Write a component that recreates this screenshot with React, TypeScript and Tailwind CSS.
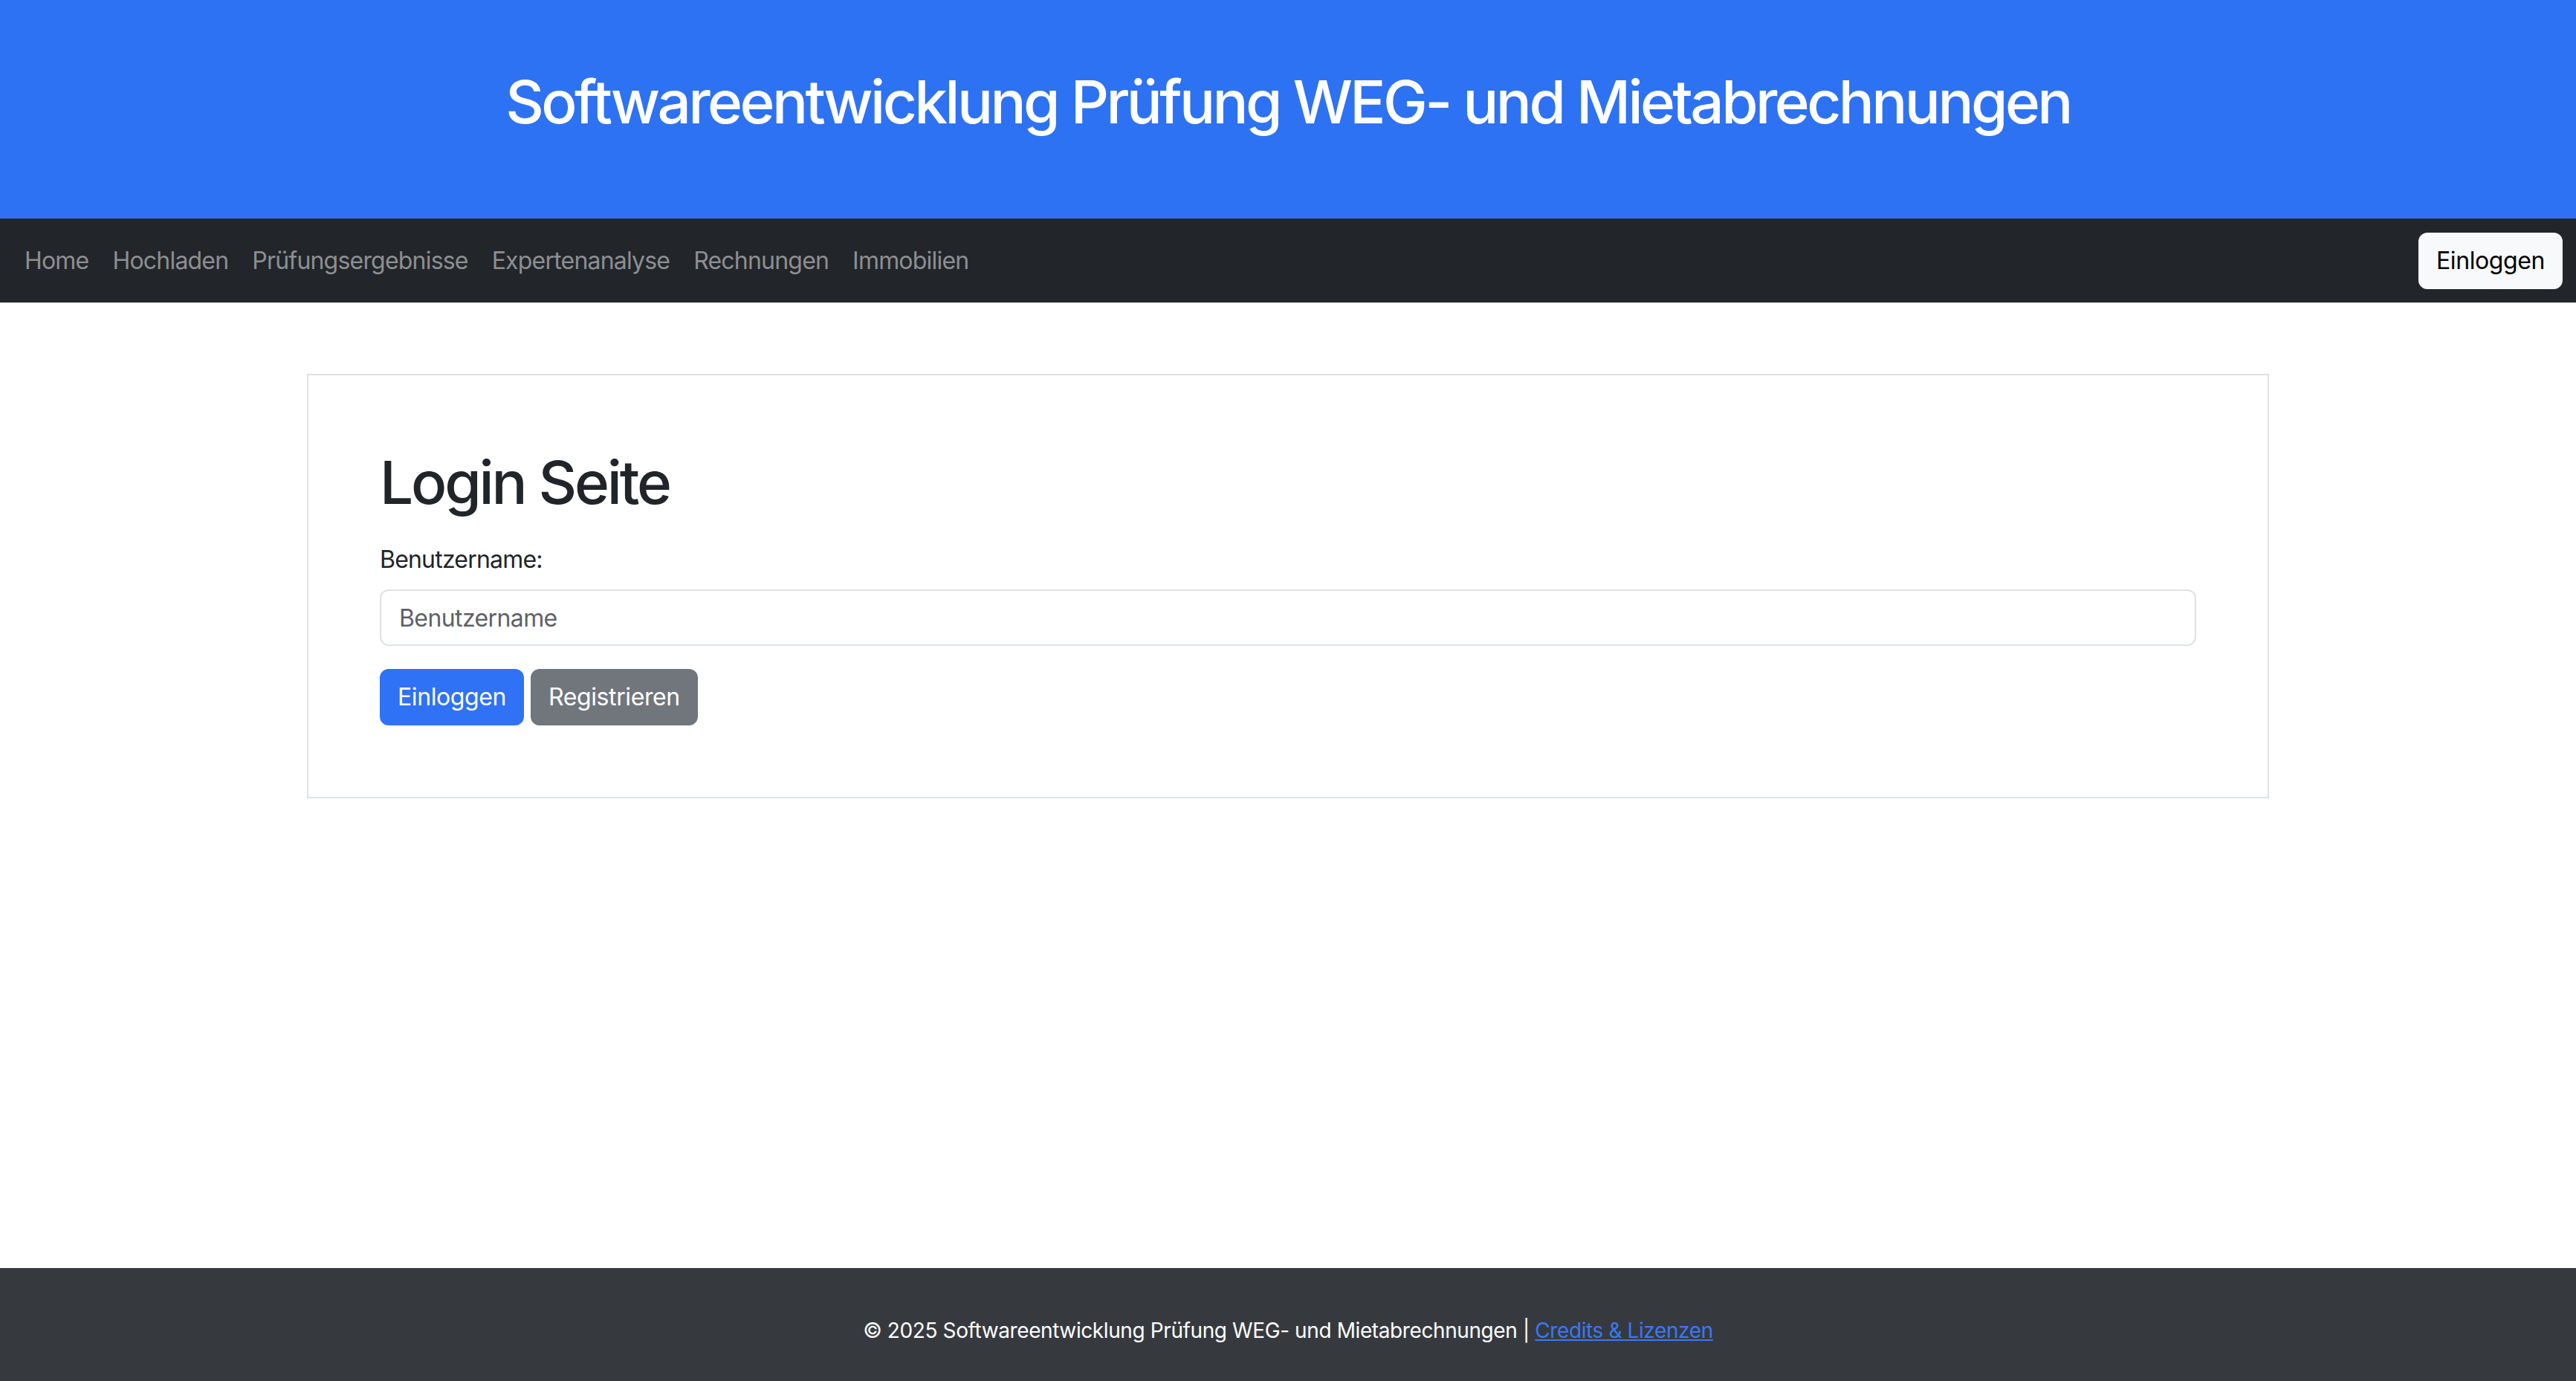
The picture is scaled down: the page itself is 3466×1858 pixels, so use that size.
import React from "react";

const font = { fontFamily: "Inter, 'Noto Sans', 'Liberation Sans', sans-serif" };

const navLinks = ["Home", "Hochladen", "Prüfungsergebnisse", "Expertenanalyse", "Rechnungen", "Immobilien"];

export default function App() {
    return (
        <div className="flex flex-col min-h-screen bg-white" style={font}>
            <header className="bg-[#2e72f4] h-[294px] pt-[89px] text-center">
                <h1 className="text-[80px] leading-[96px] font-medium tracking-[-3.6px] text-white">
                    Softwareentwicklung Prüfung WEG- und Mietabrechnungen
                </h1>
            </header>

            <nav className="bg-[#222529] h-[113px] flex items-center justify-between pl-[17px] pr-[18px]">
                <div className="flex">
                    {navLinks.map((link) => (
                        <a key={link} href="#" className="px-[16px] text-[32px] leading-[48px] tracking-[-0.8px] text-[#8d8f92]">
                            {link}
                        </a>
                    ))}
                </div>
                <button className="bg-[#f8f9fa] text-black text-[32px] leading-[48px] tracking-[-0.4px] h-[76px] px-[24px] rounded-[12px]">
                    Einloggen
                </button>
            </nav>

            <main className="flex-1 pt-[96px]">
                <div className="w-[2640px] mx-auto border-2 border-[#dee2e6] p-[96px]">
                    <h1 className="text-[80px] leading-[96px] font-medium tracking-[-3.2px] text-[#212529]">Login Seite</h1>
                    <label className="block mt-[32px] mb-[16px] text-[32px] leading-[48px] tracking-[-0.8px] text-[#212529]">
                        Benutzername:
                    </label>
                    <input
                        type="text"
                        placeholder="Benutzername"
                        className="block w-full h-[76px] px-[24px] text-[32px] tracking-[-0.6px] border-2 border-[#dee2e6] rounded-[12px] text-[#212529] placeholder:text-[#5e6166] outline-none"
                    />
                    <div className="flex gap-[9px] mt-[31px]">
                        <button className="bg-[#2f72f5] text-white text-[32px] leading-[48px] tracking-[-0.4px] h-[76px] px-[24px] rounded-[12px]">
                            Einloggen
                        </button>
                        <button className="bg-[#71767d] text-white text-[32px] leading-[48px] tracking-[-0.4px] h-[76px] px-[24px] rounded-[12px]">
                            Registrieren
                        </button>
                    </div>
                </div>
            </main>

            <footer className="bg-[#363a3f] h-[152px] pt-[63px] text-center text-white text-[28px] leading-[42px] tracking-[-0.4px]">
                <p>
                    © 2025 Softwareentwicklung Prüfung WEG- und Mietabrechnungen |{" "}
                    <a href="#" className="text-[#3a78f5] underline">Credits &amp; Lizenzen</a>
                </p>
            </footer>
        </div>
    );
}
